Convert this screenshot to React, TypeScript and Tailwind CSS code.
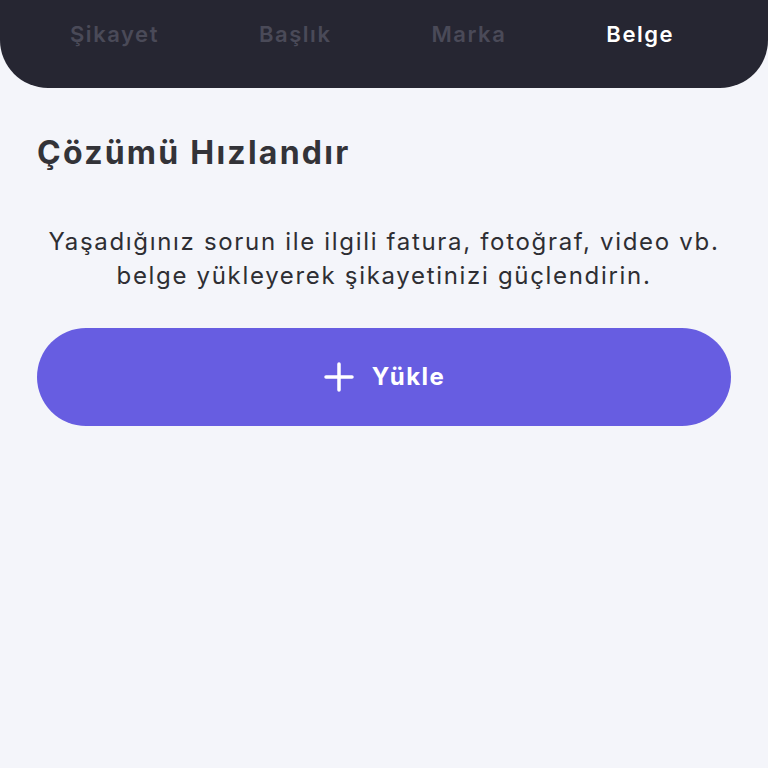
import React from 'react';

const tabs = ['Şikayet', 'Başlık', 'Marka', 'Belge'];

const App: React.FC = () => {
    const active = 'Belge';

    return (
        <div className="min-h-[768px] w-full bg-[#f4f5fa]" style={{ fontFamily: 'Inter, "Noto Sans", sans-serif' }}>
            <div className="h-[88px] bg-[#262632] rounded-b-[48px] flex items-start pl-[70px] pt-[18px] gap-[100px]">
                {tabs.map(tab => (
                    <span
                        key={tab}
                        className={`text-[22px] font-semibold leading-[32px] tracking-[0.07em] ${tab === active ? 'text-white' : 'text-[#4a4a58]'}`}
                    >
                        {tab}
                    </span>
                ))}
            </div>
            <div className="px-[37px]">
                <h2 className="mt-[44px] text-[32px] font-bold leading-[42px] tracking-[0.07em] text-[#333338]">Çözümü Hızlandır</h2>
                <p className="mt-[51px] text-center text-[24px] leading-[34px] tracking-[0.07em] text-[#2e2e33]">
                    Yaşadığınız sorun ile ilgili fatura, fotoğraf, video vb.
                    <br />
                    belge yükleyerek şikayetinizi güçlendirin.
                </p>
                <button className="mt-[35px] w-full h-[98px] rounded-full bg-[#675de1] flex items-center justify-center gap-[17px] text-white">
                    <svg width="32" height="32" viewBox="0 0 32 32" fill="none" stroke="white" strokeWidth="3.5" strokeLinecap="round">
                        <path d="M16 3v26M3 16h26" />
                    </svg>
                    <span className="text-[24px] font-bold tracking-[0.06em]">Yükle</span>
                </button>
            </div>
        </div>
    );
};

export default App;
